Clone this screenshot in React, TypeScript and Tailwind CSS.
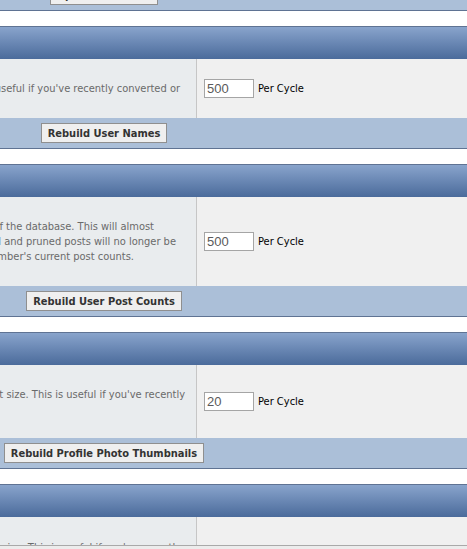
import React from "react";

type Line = { text: string; end?: number; bold?: boolean };

type Section = {
  title: string;
  button: string;
  value: string;
  bodyH: string;
  top?: boolean;
  lines: Line[];
};

// left column spans screen x -259..196, the page is scrolled sideways
const sections: Section[] = [
  {
    title: "Rebuild User Names",
    button: "Rebuild User Names",
    value: "500",
    bodyH: "h-[59px]",
    lines: [
      { text: "Rebuild User Names", bold: true },
      {
        text: "This will update the user names stored with posts, threads and forums. This is useful if you've recently converted or",
        end: 180,
      },
      { text: "imported your board." },
    ],
  },
  {
    title: "Rebuild User Post Counts",
    button: "Rebuild User Post Counts",
    value: "500",
    bodyH: "h-[89px]",
    lines: [
      { text: "Rebuild User Post Counts", bold: true },
      { text: "This will recount the number of posts each user has based on the contents of the database. This will almost", end: 154 },
      { text: "certainly reduce the post counts of your users, as deleted and pruned posts will no longer be", end: 176 },
      { text: "counted. Use with caution! This will reset every member's current post counts.", end: 134 },
      { text: "" },
    ],
  },
  {
    title: "Rebuild Profile Photo Thumbnails",
    button: "Rebuild Profile Photo Thumbnails",
    value: "20",
    bodyH: "h-[73px]",
    lines: [
      { text: "Rebuild Profile Photo Thumbnails", bold: true },
      { text: "This will rebuild the thumbnails of all profile photos to the current size. This is useful if you've recently", end: 185 },
      { text: "changed the size." },
      { text: "" },
    ],
  },
  {
    title: "Rebuild Avatar Thumbnails",
    button: "Rebuild Avatar Thumbnails",
    value: "20",
    bodyH: "h-[73px]",
    top: true,
    lines: [
      { text: "Rebuild Avatar Thumbnails", bold: true },
      { text: "This will rebuild the thumbnails of all custom avatars to the current size. This is useful if you've recently", end: 181 },
      { text: "changed the size." },
    ],
  },
];

function TextLine({ line }: { line: Line }) {
  if (line.end !== undefined) {
    return (
      <div
        className="flex justify-end whitespace-nowrap h-[15px]"
        style={{ paddingRight: 196 - line.end }}
      >
        <span>{line.text}</span>
      </div>
    );
  }
  return (
    <div className={"whitespace-nowrap h-[15px] " + (line.bold ? "font-bold text-[#333]" : "")}>
      {line.text}
    </div>
  );
}

function Button({ label }: { label: string }) {
  return (
    <button className="h-[20px] px-[6px] bg-[#efefef] border border-[#8f8f8f] text-[11px] font-bold text-[#333] leading-none whitespace-nowrap">
      {label}
    </button>
  );
}

function Footer({ label }: { label: string }) {
  return (
    <div className="h-[30px] bg-[#abbfd8] flex items-center justify-center">
      <Button label={label} />
    </div>
  );
}

function Block({ s }: { s: Section }) {
  return (
    <div className="border-y border-[#5f7393]">
      <div className="h-[32px] bg-linear-to-b from-[#89a4cc] to-[#4b6b9b] flex items-center pl-[6px] text-white font-bold text-[11px]">
        {s.title}
      </div>
      <div className={"flex " + s.bodyH}>
        <div
          className={
            "w-[456px] shrink-0 bg-[#e9ecee] border-r border-[#c6c6c6] flex flex-col overflow-hidden pl-[6px] text-[11px] leading-[15px] text-[#6a6a6a] " +
            (s.top ? "justify-start pt-[8px]" : "justify-center")
          }
        >
          {s.lines.map((l, i) => (
            <TextLine key={i} line={l} />
          ))}
        </div>
        {s.top ? (
          <div className="flex-1 bg-[#f0f0f0]" />
        ) : (
          <div className="flex-1 bg-[#f0f0f0] flex items-center pl-[7px] gap-[4px]">
            <input
              defaultValue={s.value}
              className="w-[50px] h-[19px] bg-white border border-[#a5a5a5] px-[2px] text-[13px] text-[#5a5a5a] outline-none"
              style={{ fontFamily: "'Liberation Sans', Arial, sans-serif" }}
            />
            <span className="text-[11px] text-black mt-[2px]">Per Cycle</span>
          </div>
        )}
      </div>
      <Footer label={s.button} />
    </div>
  );
}

export default function App() {
  return (
    <div
      className="w-[467px] h-[549px] overflow-hidden bg-white relative"
      style={{ fontFamily: "'DejaVu Sans Condensed', 'Liberation Sans', sans-serif" }}
    >
      <div className="w-[726px] ml-[-259px] flex flex-col gap-[15px] mt-[-20px]">
        {/* tail of the block above */}
        <div className="border-b border-[#5f7393]">
          <div className="h-[30px] bg-[#abbfd8] flex items-center justify-center">
            <Button label="Update Counters" />
          </div>
        </div>
        {sections.map((s, i) => (
          <Block key={i} s={s} />
        ))}
      </div>
      <div className="absolute bottom-0 left-0 right-0 h-[4px] bg-[#ececec] border-t border-[#a9a9a9]" />
    </div>
  );
}
